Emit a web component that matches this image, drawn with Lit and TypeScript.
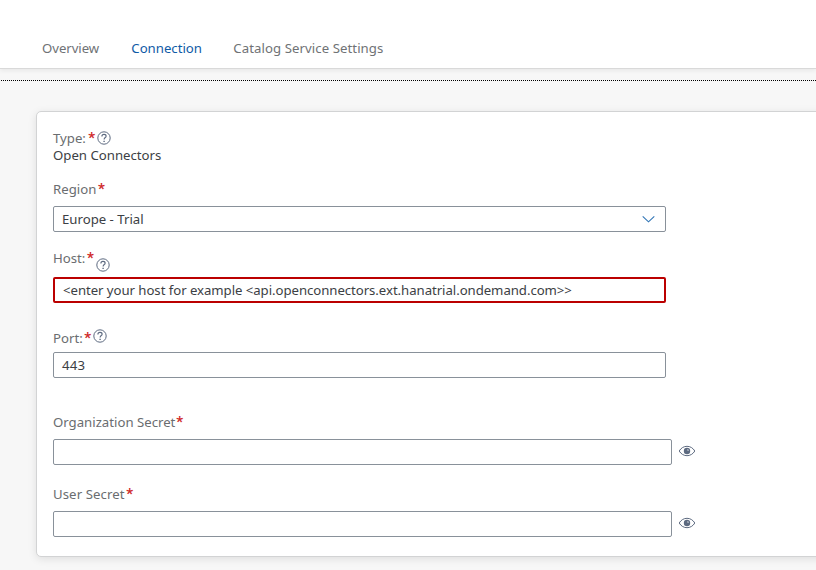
import { LitElement, html, css } from "lit";
import { customElement, property } from "lit/decorators.js";

const helpIcon = html`<svg class="help" width="14" height="14" viewBox="0 0 14 14" fill="none" stroke="#5d6a80">
  <circle cx="7" cy="7" r="6.2" stroke-width="1"></circle>
  <path d="M4.9 5.4C4.9 4.1 5.8 3.4 7 3.4S9.1 4.1 9.1 5.2C9.1 6.5 7.1 6.7 7.1 8.5" stroke-width="1.15"></path>
  <path d="M6.4 10.3h1.4" stroke-width="1.3"></path>
</svg>`;

const eyeIcon = html`<svg class="eye" width="18" height="12" viewBox="0 0 18 12" fill="none">
  <path d="M1.2 6C3 3 5.8 1.3 9 1.3S15 3 16.8 6C15 9 12.2 10.7 9 10.7S3 9 1.2 6Z" stroke="#5d6a80" stroke-width="1"></path>
  <circle cx="9" cy="6" r="3.2" fill="#5d6a80"></circle>
  <path d="M9.3 5.7V3.9A1.9 1.9 0 0 1 11 5.7Z" fill="#c3c9d2"></path>
</svg>`;

@customElement("field-label")
export class FieldLabel extends LitElement {
  @property() text = "";
  @property({ type: Boolean }) help = false;
  static styles = css`
    :host { display: flex; height: 16px; line-height: 16px; color: #6a6d70; }
    .star { color: #d02c2c; font-family: Roboto, sans-serif; font-weight: 700; font-size: 15px; letter-spacing: 0; margin-left: var(--star-gap, 1.6px); height: 16px; line-height: 16px; }
    .help { display: block; margin: var(--help-top, 1px) 0 0 var(--help-left, 2px); flex: none; }
  `;
  render() {
    return html`<span>${this.text}</span><span class="star">*</span>${this.help ? helpIcon : ""}`;
  }
}

@customElement("app-root")
export class AppRoot extends LitElement {
  static styles = css`
    :host { display: block; height: 570px; overflow: hidden; background: #f7f7f7; font: 13.2px/16px "Noto Sans", sans-serif; color: #3c4044; }
    * { box-sizing: border-box; }
    .tabs { display: flex; height: 69px; padding: 40px 0 0 42px; background: #fff; border-bottom: 1px solid #d9d9d9; box-shadow: 0 2px 4px rgba(0, 0, 0, 0.06); color: #6f7275; }
    .tab { white-space: nowrap; }
    .overview { width: 89.3px; letter-spacing: -0.05px; }
    .connection { width: 102px; color: #0f5aa6; }
    .catalog { letter-spacing: 0.07px; }
    .rule { height: 1px; margin-top: 11px; background: repeating-linear-gradient(90deg, transparent 0 1px, #000 1px 2px); }
    .card { display: flex; flex-direction: column; align-items: flex-start; width: 800px; height: 446px; margin: 30px 0 0 36px; padding: 18px 16px 0; background: #fff; border: 1px solid #d2d3d4; border-radius: 5px; box-shadow: 0 2px 8px rgba(0, 0, 0, 0.1); }
    .value { margin: 1px 0 18px; }
    .box { display: flex; align-items: center; justify-content: space-between; width: 613px; height: 26px; padding: 0 10px 0 8px; background: #fff; border: 1px solid #89919a; border-radius: 2px; }
    .error { border: 2px solid #bb0000; padding-left: 8px; letter-spacing: -0.05px; }
    .number { letter-spacing: 0.2px; }
    .wide { width: 619px; }
    .row { display: flex; align-items: center; }
    .eye { display: block; margin: 0 0 2px 6px; }
    .type-label { --star-gap: 2.4px; }
    .region { margin-bottom: 9px; }
    .host-label { margin: 18px 0 11px; --help-top: 8px; --help-left: 2.5px; }
    .port-label { margin: 27px 0 6px; --help-top: -1px; }
    .org-label { margin: 36px 0 9px; --star-gap: 0.8px; }
    .user-label { margin: 21px 0 9px; letter-spacing: 0.08px; }
  `;
  render() {
    return html`
      <nav class="tabs">
        <span class="tab overview">Overview</span>
        <span class="tab connection">Connection</span>
        <span class="tab catalog">Catalog Service Settings</span>
      </nav>
      <div class="rule"></div>
      <section class="card">
        <field-label class="type-label" text="Type:" help></field-label>
        <div class="value">Open Connectors</div>
        <field-label class="region" text="Region"></field-label>
        <div class="box"><span>Europe - Trial</span>
          <svg width="13" height="8" viewBox="0 0 13 8" fill="none" stroke="#2f74b5" stroke-width="1.1"><path d="M.7 1.4l5.8 5.4 5.8-5.4"></path></svg>
        </div>
        <field-label class="host-label" text="Host:" help></field-label>
        <div class="box error"><span>&lt;enter your host for example &lt;api.openconnectors.ext.hanatrial.ondemand.com&gt;&gt;</span></div>
        <field-label class="port-label" text="Port:" help></field-label>
        <div class="box number"><span>443</span></div>
        <field-label class="org-label" text="Organization Secret"></field-label>
        <div class="row"><div class="box wide"></div>${eyeIcon}</div>
        <field-label class="user-label" text="User Secret"></field-label>
        <div class="row"><div class="box wide"></div>${eyeIcon}</div>
      </section>
    `;
  }
}
